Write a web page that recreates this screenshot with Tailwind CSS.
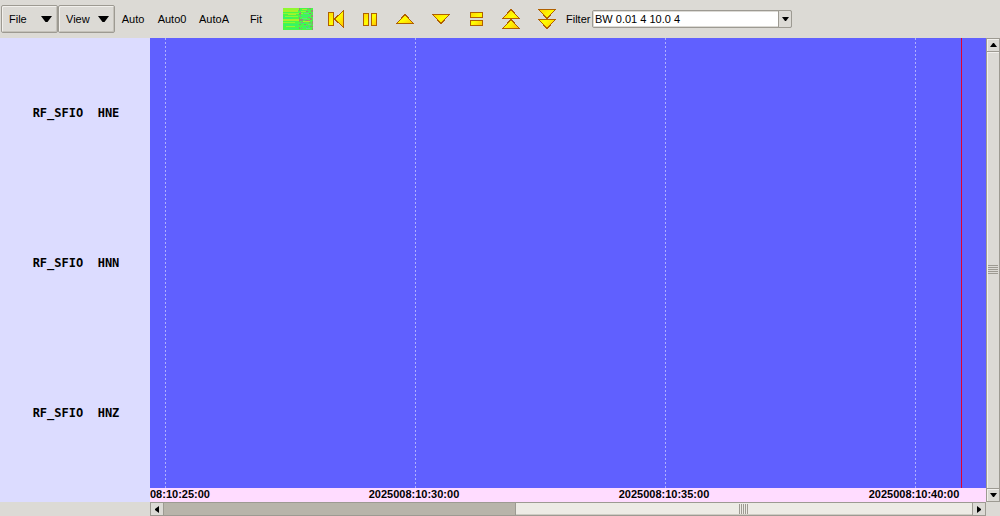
<!DOCTYPE html>
<html lang="en">
<head>
<meta charset="utf-8">
<meta name="viewport" content="width=device-width, initial-scale=1">
<title>Waveform viewer</title>
<script src="https://cdn.jsdelivr.net/npm/@tailwindcss/browser@4"></script>
</head>
<body class="flex h-screen flex-col overflow-hidden bg-[#dcdad5] font-['Liberation_Sans',sans-serif] text-[11px] leading-4 text-black">
<svg class="absolute size-0" aria-hidden="true">
  <defs>
    <linearGradient id="gold" x1="0" y1="0" x2="1" y2="1"><stop offset="0" stop-color="#ffd000"/><stop offset=".5" stop-color="#ffff00"/><stop offset="1" stop-color="#ffc000"/></linearGradient>
  </defs>
</svg>
<header class="flex h-[38px] shrink-0 items-center pl-px">
  <button class="flex h-7 w-[57px] items-center justify-between rounded-xs border border-[#9d9a92] pr-[5px] pl-[7px] shadow-[inset_1px_1px_0_#f2f0ec,inset_-1px_-1px_0_#c4c1b9]">File<svg class="h-[6px] w-[11px]" viewBox="0 0 11 6"><path d="M0 0h11L6.500 6h-2z"/></svg></button>
  <button class="flex h-7 w-[57px] items-center justify-between rounded-xs border border-[#9d9a92] pr-[5px] pl-[7px] shadow-[inset_1px_1px_0_#f2f0ec,inset_-1px_-1px_0_#c4c1b9]">View<svg class="h-[6px] w-[11px]" viewBox="0 0 11 6"><path d="M0 0h11L6.500 6h-2z"/></svg></button>
  <button class="w-9">Auto</button>
  <button class="w-[42px]">Auto0</button>
  <button class="w-[42px]">AutoA</button>
  <button class="w-[42px]">Fit</button>
  <button class="ml-1.5 w-[30px]" aria-label="Spectrogram">
    <svg class="h-[22px] w-[30px]" viewBox="0 0 30 22" shape-rendering="crispEdges">
      <path fill="#48f848" d="M0 0h30v22H0z"/>
      <path fill="#90f830" d="M0 0h17v2H0zM0 5h20v1H0zM2 8h13v1H2zM0 14h12v1H0zM18 3h6v1h-6zM3 18h9v1H3z"/>
      <path fill="#a8f028" d="M0 2h15v2H0zM0 11h18v2H0zM5 6h8v1H5zM19 1h6v1h-6zM20 13h7v1h-7z"/>
      <path fill="#38f468" d="M0 9h9v2H0zM1 16h14v2H1zM18 7h9v2h-9zM20 18h6v2h-6zM17 15h6v1h-6zM4 20h12v1H4z"/>
      <path fill="#60d890" d="M21 5h5v1h-5zM19 10h5v1h-5zM25 16h3v1h-3zM23 20h4v1h-4z"/>
      <path fill="#8a9a70" d="M16 0h1v3h-1zM16 5h2v2h-2zM16 9h1v5h-1zM17 11h3v2h-3zM16 16h2v1h-2zM16 19h1v2h-1zM22 12h3v1h-3zM26 0h2v1h-2zM28 2h2v2h-2zM26 5h2v1h-2zM28 7h2v2h-2zM27 10h2v2h-2zM29 13h1v3h-1zM26 14h2v1h-2zM27 18h3v1h-3zM29 20h1v2h-1zM23 3h2v1h-2zM21 16h2v1h-2z"/>
      <path fill="#a08890" d="M17 4h1v1h-1zM17 8h1v1h-1zM18 14h2v1h-2zM24 1h1v1h-1zM28 5h1v1h-1zM25 9h2v1h-2zM25 12h2v1h-2zM28 16h1v1h-1zM24 18h1v1h-1zM18 20h1v1h-1z"/>
    </svg>
  </button>
  <div class="ml-1.5 flex [&_path]:fill-[url(#gold)] [&_path]:stroke-[#b06000]">
    <button aria-label="Go to start"><svg class="h-6 w-[35px]" viewBox="0 0 35 24" shape-rendering="crispEdges"><path d="M9.500 5.500h5v13h-5zM24.500 3.500v17L15.500 12z"/></svg></button>
    <button aria-label="Pause"><svg class="h-6 w-[35px]" viewBox="0 0 35 24" shape-rendering="crispEdges"><path d="M9.500 6.500h5v12h-5zM17.500 6.500h5v12h-5z"/></svg></button>
    <button aria-label="Scale up"><svg class="h-6 w-[35px]" viewBox="0 0 35 24" shape-rendering="crispEdges"><path d="M7.500 16.500h17L16 7.500z"/></svg></button>
    <button aria-label="Scale down"><svg class="h-6 w-[35px]" viewBox="0 0 35 24" shape-rendering="crispEdges"><path d="M8.500 7.500h17L17 16.500z"/></svg></button>
    <button aria-label="Equal scale"><svg class="h-6 w-[35px]" viewBox="0 0 35 24" shape-rendering="crispEdges"><path d="M11.500 5.500h12v5h-12zM11.500 13.500h12v5h-12z"/></svg></button>
    <button aria-label="Scale up fast"><svg class="h-6 w-[35px]" viewBox="0 0 35 24" shape-rendering="crispEdges"><path d="M8.500 11.500h17L17 2.500zM8.500 21.500h17L17 12.500z"/></svg></button>
    <button aria-label="Scale down fast"><svg class="h-6 w-[35px]" viewBox="0 0 35 24" shape-rendering="crispEdges"><path d="M9.500 2.500h17L18 11.500zM9.500 12.500h17L18 21.500z"/></svg></button>
  </div>
  <label for="filter" class="ml-0.5 w-[26px]">Filter</label>
  <div class="relative h-[18px] w-[200px]">
    <select id="filter" class="block h-full w-full appearance-none rounded-xs border border-[#9d9a92] bg-white pl-0.5 leading-4 shadow-[inset_0_0_0_1px_#dcdad5]"><option>BW 0.01 4 10.0 4</option></select>
    <span class="pointer-events-none absolute inset-y-0 right-0 flex w-[14px] items-center justify-center rounded-r-xs border border-[#9d9a92] bg-[#dcdad5]"><svg class="h-1 w-[7px]" viewBox="0 0 7 4"><path d="M0 0h7L4 4H3z"/></svg></span>
  </div>
</header>
<main class="flex min-h-0 flex-1">
  <div class="flex w-[150px] shrink-0 flex-col">
    <div class="flex min-h-0 flex-1 flex-col bg-[#dcdcff] pb-[14px] text-center font-['DejaVu_Sans_Mono',monospace] text-xs font-bold whitespace-pre">
      <div class="flex flex-1 items-center justify-center pl-0.5">RF_SFIO  HNE</div>
      <div class="flex flex-1 items-center justify-center pl-0.5">RF_SFIO  HNN</div>
      <div class="flex flex-1 items-center justify-center pl-0.5">RF_SFIO  HNZ</div>
    </div>
    <div class="h-[14px]"></div>
  </div>
  <div class="flex min-w-0 flex-1 flex-col">
    <div class="flex min-h-0 flex-1 overflow-hidden bg-[#6060ff] pl-[15px]">
      <div class="w-[250px] shrink-0"><div class="h-full w-px bg-[repeating-linear-gradient(to_bottom,#b0b0ff_0_2px,transparent_2px_4px)]"></div></div>
      <div class="w-[250px] shrink-0"><div class="h-full w-px bg-[repeating-linear-gradient(to_bottom,#b0b0ff_0_2px,transparent_2px_4px)]"></div></div>
      <div class="w-[250px] shrink-0"><div class="h-full w-px bg-[repeating-linear-gradient(to_bottom,#b0b0ff_0_2px,transparent_2px_4px)]"></div></div>
      <div class="flex w-[250px] shrink-0 gap-[45px]"><div class="h-full w-px bg-[repeating-linear-gradient(to_bottom,#b0b0ff_0_2px,transparent_2px_4px)]"></div><div class="h-full w-px bg-[#e00030]"></div></div>
    </div>
    <div class="flex h-[14px] shrink-0 overflow-hidden bg-[#ffdcff] text-center font-bold leading-[13px]">
      <div class="w-[139px] shrink-0 text-left">08:10:25:00</div>
      <div class="w-[250px] shrink-0">2025008:10:30:00</div>
      <div class="w-[250px] shrink-0">2025008:10:35:00</div>
      <div class="w-[250px] shrink-0">2025008:10:40:00</div>
    </div>
    <div class="flex h-[14px] shrink-0 border-y border-[#9d9a92] bg-[#b8b4aa]">
      <button aria-label="Scroll left" class="flex w-[14px] items-center justify-center border-x border-[#9d9a92] bg-[#dcdad5]"><svg class="h-[7px] w-1" viewBox="0 0 4 7"><path d="M4 0v7L0 4V3z"/></svg></button>
      <div class="flex-[351]"></div>
      <div class="flex flex-[457] items-center justify-center border-l border-[#9d9a92] bg-[#edebe5] shadow-[inset_0_-1px_0_#cfccc4]"><span class="h-[10px] w-[10px] bg-[repeating-linear-gradient(to_right,#9d9a92_0_1px,transparent_1px_2px)]"></span></div>
      <button aria-label="Scroll right" class="flex w-[14px] items-center justify-center border-x border-[#9d9a92] bg-[#dcdad5]"><svg class="h-[7px] w-1" viewBox="0 0 4 7"><path d="M0 0v7L4 4V3z"/></svg></button>
    </div>
  </div>
  <div class="mb-[14px] flex w-[14px] shrink-0 flex-col border-x border-[#9d9a92]">
    <button aria-label="Scroll up" class="flex h-[14px] items-center justify-center border-y border-[#9d9a92] shadow-[inset_1px_1px_0_#f2f0ec]"><svg class="h-1 w-[7px]" viewBox="0 0 7 4"><path d="M0 4h7L4 0H3z"/></svg></button>
    <div class="flex flex-1 items-center justify-center shadow-[inset_1px_1px_0_#f2f0ec]"><span class="h-[10px] w-[10px] bg-[repeating-linear-gradient(to_bottom,#9d9a92_0_1px,transparent_1px_2px)]"></span></div>
    <button aria-label="Scroll down" class="flex h-[14px] items-center justify-center border-y border-[#9d9a92] shadow-[inset_1px_1px_0_#f2f0ec]"><svg class="h-1 w-[7px]" viewBox="0 0 7 4"><path d="M0 0h7L4 4H3z"/></svg></button>
  </div>
</main>
</body>
</html>
